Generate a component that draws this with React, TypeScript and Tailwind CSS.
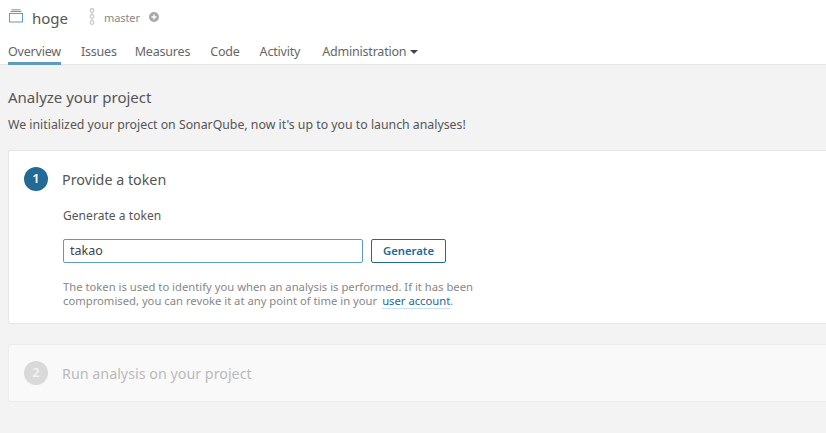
export default function App() {
  const tabs = [
    { label: "Overview", cls: "h-[29px] border-b-[3px] border-[#5d9cbf] pt-[4px]" },
    { label: "Issues", cls: "pt-[4px] mr-[-2px]" },
    { label: "Measures", cls: "pt-[4px]" },
    { label: "Code", cls: "pt-[4px]" },
    { label: "Activity", cls: "pt-[4px] mr-[2px]" },
  ];
  return (
    <div className="h-[433px] w-[826px] overflow-hidden bg-[#f3f3f3] font-['Noto_Sans','Open_Sans',sans-serif] text-[#555]">
      <header className="h-[65px] border-b border-[#e6e6e6] bg-white">
        <div className="flex h-[36px] items-center pl-[8px]">
          <svg width="16" height="14" viewBox="0 0 16 14" fill="none" stroke="#5d9cbf" strokeWidth="1" className="mt-[-4px]">
            <rect x="1.5" y="4.5" width="13" height="8.5" />
            <path d="M2.5 2.5h11M3.5 0.8h9" />
          </svg>
          <span className="ml-[8px] text-[15px] leading-[20px] text-[#555]">hoge</span>
          <svg width="8" height="17" viewBox="0 0 8 17" fill="none" stroke="#c8c8c8" strokeWidth="1.2" className="ml-[20px] mt-[-3px]">
            <circle cx="4" cy="2.5" r="1.8" />
            <circle cx="4" cy="8.5" r="1.8" />
            <circle cx="4" cy="14.5" r="1.8" />
            <path d="M4 4.3v2.4M4 10.3v2.4" />
          </svg>
          <span className="ml-[8px] text-[11px] leading-[16px] tracking-[-0.1px] text-[#888]">master</span>
          <svg width="10" height="10" viewBox="0 0 10 10" className="ml-[9px] mt-[-2px]">
            <circle cx="5" cy="5" r="5" fill="#a8a8a8" />
            <path d="M5 2.5v5M2.5 5h5" stroke="#fff" strokeWidth="1.4" />
          </svg>
        </div>
        <nav className="flex h-[29px] items-start gap-[20px] pl-[8px] text-[12.5px] leading-[24px] tracking-[-0.2px] text-[#666]">
          {tabs.map((t) => (
            <span key={t.label} className={t.cls}>
              {t.label}
            </span>
          ))}
          <span className="flex items-center pt-[4px]">
            Administration
            <svg width="8" height="4" viewBox="0 0 8 4" className="ml-[4px]">
              <path d="M0 0h8L4 4z" fill="#444" />
            </svg>
          </span>
        </nav>
      </header>
      <main className="pl-[8px]">
        <h1 className="mt-[22px] text-[15px] leading-[20px] font-normal text-[#555]">Analyze your project</h1>
        <p className="mt-[9px] text-[12.3px] leading-[18px] text-[#555]">
          We initialized your project on SonarQube, now it's up to you to launch analyses!
        </p>
        <section className="mt-[16px] h-[174px] w-[830px] rounded-[2px] border border-[#e6e6e6] bg-white pl-[15px] pt-[15px]">
          <div className="flex items-center">
            <span className="flex h-[24px] w-[24px] items-center justify-center rounded-full bg-[#236a97] text-[13px] font-semibold text-white">1</span>
            <h2 className="ml-[14px] mt-[2px] text-[14.3px] leading-[24px] font-normal text-[#555]">Provide a token</h2>
          </div>
          <div className="pl-[39px]">
            <p className="mt-[15px] text-[12px] leading-[18px] tracking-[0.05px] text-[#555]">Generate a token</p>
            <div className="mt-[14px] flex items-center">
              <div className="flex h-[24px] w-[300px] items-center rounded-[2px] border border-[#5d9cbf] pl-[6px] text-[12.5px] text-[#444]">takao</div>
              <button className="ml-[8px] h-[24px] w-[75px] rounded-[2px] border border-[#236a97] bg-white text-[11.3px] font-semibold text-[#236a97]">Generate</button>
            </div>
            <p className="mt-[17px] text-[11.25px] leading-[14px] text-[#888]">
              The token is used to identify you when an analysis is performed. If it has been
              <br />
              compromised, you can revoke it at any point of time in your{" "}
              <span className="ml-[2px] border-b border-[#cae3f2] text-[#236a97]">user account</span>.
            </p>
          </div>
        </section>
        <section className="mt-[20px] flex h-[58px] w-[830px] items-center rounded-[2px] border border-[#ececec] bg-[#f9f9f9] pl-[15px]">
          <span className="flex h-[24px] w-[24px] items-center justify-center rounded-full bg-[#d9d9d9] text-[13px] font-semibold text-[#f3f3f3]">2</span>
          <h2 className="ml-[14px] mt-[1px] text-[14.3px] leading-[24px] font-normal text-[#bbb]">Run analysis on your project</h2>
        </section>
      </main>
    </div>
  );
}
